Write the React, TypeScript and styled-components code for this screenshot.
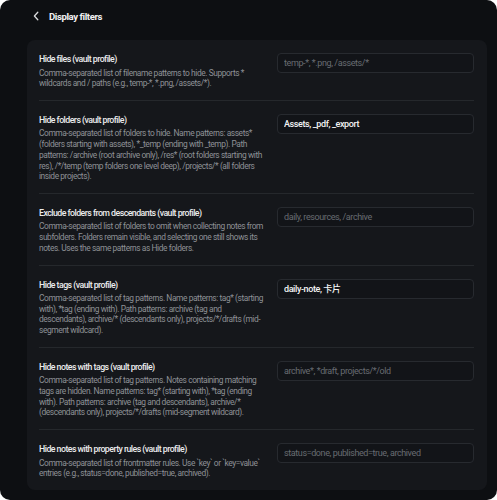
import React from 'react';
import styled, { createGlobalStyle } from 'styled-components';

const GlobalStyle = createGlobalStyle`
    html, body {
        margin: 0;
        padding: 0;
        background: #ffffff;
    }
    * {
        box-sizing: border-box;
    }
`;

interface FilterSetting {
    title: string;
    description: string;
    value?: string;
    placeholder: string;
}

const SETTINGS: FilterSetting[] = [
    {
        title: 'Hide files (vault profile)',
        description:
            'Comma-separated list of filename patterns to hide. Supports * wildcards and / paths (e.g., temp-*, *.png, /assets/*).',
        placeholder: 'temp-*, *.png, /assets/*',
    },
    {
        title: 'Hide folders (vault profile)',
        description:
            'Comma-separated list of folders to hide. Name patterns: assets* (folders starting with assets), *_temp (ending with _temp). Path patterns: /archive (root archive only), /res* (root folders starting with res), /*/temp (temp folders one level deep), /projects/* (all folders inside projects).',
        value: 'Assets, _pdf, _export',
        placeholder: '',
    },
    {
        title: 'Exclude folders from descendants (vault profile)',
        description:
            'Comma-separated list of folders to omit when collecting notes from subfolders. Folders remain visible, and selecting one still shows its notes. Uses the same patterns as Hide folders.',
        placeholder: 'daily, resources, /archive',
    },
    {
        title: 'Hide tags (vault profile)',
        description:
            'Comma-separated list of tag patterns. Name patterns: tag* (starting with), *tag (ending with). Path patterns: archive (tag and descendants), archive/* (descendants only), projects/*/drafts (mid-segment wildcard).',
        value: 'daily-note, 卡片',
        placeholder: '',
    },
    {
        title: 'Hide notes with tags (vault profile)',
        description:
            'Comma-separated list of tag patterns. Notes containing matching tags are hidden. Name patterns: tag* (starting with), *tag (ending with). Path patterns: archive (tag and descendants), archive/* (descendants only), projects/*/drafts (mid-segment wildcard).',
        placeholder: 'archive*, *draft, projects/*/old',
    },
    {
        title: 'Hide notes with property rules (vault profile)',
        description:
            'Comma-separated list of frontmatter rules. Use `key` or `key=value` entries (e.g., status=done, published=true, archived).',
        placeholder: 'status=done, published=true, archived',
    },
];

const Window = styled.div`
    width: 497px;
    height: 500px;
    overflow: hidden;
    border-radius: 10px;
    background: #0d0f12;
    font-family: Roboto, 'Noto Sans CJK SC', sans-serif;
    display: flex;
    flex-direction: column;
`;

const Header = styled.div`
    height: 32px;
    flex: none;
    display: flex;
    align-items: center;
    gap: 10px;
    padding-left: 33px;
`;

const BackButton = styled.button`
    display: flex;
    align-items: center;
    justify-content: center;
    padding: 0;
    width: 6px;
    height: 10px;
    border: none;
    background: none;
    color: #d8d9db;
    cursor: pointer;
`;

const HeaderTitle = styled.h1`
    margin: 0;
    font-size: 9.6px;
    font-weight: 700;
    color: #f1f1f2;
    letter-spacing: -0.42px;
`;

const Card = styled.div`
    margin: 8px 10px 10px 27px;
    padding: 0 13px 0 12px;
    background: #15171b;
    border-radius: 8px;
    flex: 1;
`;

const Row = styled.div<{ last?: boolean }>`
    display: grid;
    grid-template-columns: 230px 1fr;
    column-gap: 8px;
    align-items: start;
    padding: 13px 0 ${({ last }) => (last ? '9px' : '11px')};
    border-bottom: ${({ last }) => (last ? 'none' : '1px solid #25282c')};
`;

const Info = styled.div`
    display: flex;
    flex-direction: column;
`;

const Title = styled.div`
    font-size: 8.8px;
    line-height: 12px;
    font-weight: 500;
    color: #ececed;
    margin-bottom: 2.5px;
    letter-spacing: -0.55px;
`;

const Description = styled.div`
    font-size: 8.4px;
    line-height: 10.7px;
    color: #8e9196;
    letter-spacing: -0.42px;
`;

const Field = styled.input<{ filled?: boolean }>`
    width: 100%;
    height: 20px;
    padding: 0 6px;
    border: 1px solid #272a2f;
    border-radius: 4px;
    background: #121418;
    color: #f3f3f4;
    font-family: Roboto, 'Noto Sans CJK SC', sans-serif;
    font-size: 9px;
    letter-spacing: -0.4px;
    font-weight: ${({ filled }) => (filled ? 500 : 400)};
    outline: none;

    &::placeholder {
        color: #686c72;
    }
`;

const ChevronLeft: React.FC = () => (
    <svg width="6" height="10" viewBox="0 0 6 10" fill="none">
        <path d="M4.8 1.2 L1.4 5 L4.8 8.8" stroke="currentColor" strokeWidth="1.3" strokeLinecap="round" strokeLinejoin="round" />
    </svg>
);

const App: React.FC = () => (
    <>
        <GlobalStyle />
        <Window>
            <Header>
                <BackButton aria-label="Back">
                    <ChevronLeft />
                </BackButton>
                <HeaderTitle>Display filters</HeaderTitle>
            </Header>
            <Card>
                {SETTINGS.map((setting, index) => (
                    <Row key={setting.title} last={index === SETTINGS.length - 1}>
                        <Info>
                            <Title>{setting.title}</Title>
                            <Description>{setting.description}</Description>
                        </Info>
                        <Field
                            filled={!!setting.value}
                            defaultValue={setting.value}
                            placeholder={setting.placeholder}
                        />
                    </Row>
                ))}
            </Card>
        </Window>
    </>
);

export default App;
